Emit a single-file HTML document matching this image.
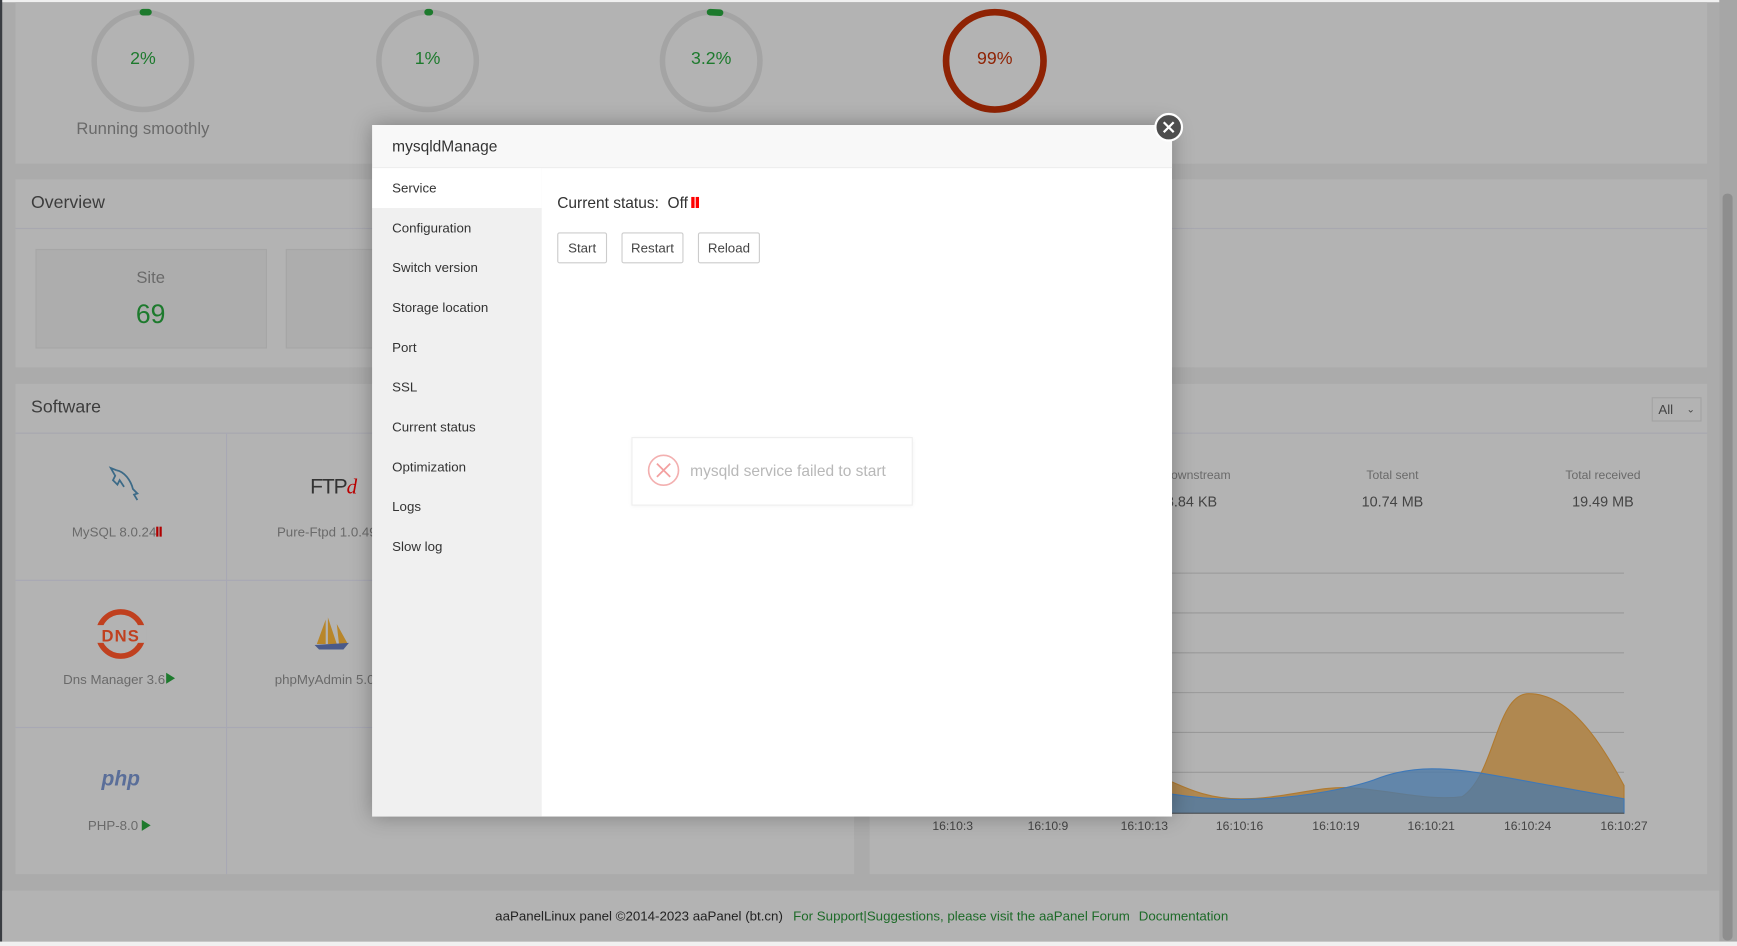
<!DOCTYPE html>
<html><head><meta charset="utf-8">
<style>
html,body{margin:0;padding:0;width:1737px;height:946px;overflow:hidden;background:#ababab;}
#w{position:absolute;left:0;top:0;width:1568px;height:855px;transform-origin:0 0;transform:scale(1.10778,1.10643);font-family:"Liberation Sans",sans-serif;background:#ababab;}
.a{position:absolute;}
.p{position:absolute;background:#b3b3b3;}
.t{position:absolute;white-space:nowrap;}
.c{transform:translateX(-50%);}
.menu div{height:36px;line-height:36px;padding-left:18px;font-size:12px;color:#333;}
.btn{position:absolute;top:210px;height:26px;line-height:26px;border:1px solid #ccc;border-radius:2px;font-size:12px;color:#444;text-align:center;background:#fff;}
</style></head><body><div id="w">
<div class="a" style="left:0;top:0;width:1568px;height:2px;background:#f0f0f0"></div>
<div class="a" style="left:0;top:0;width:2px;height:855px;background:#3a3d42"></div>
<div class="a" style="left:1552px;top:0;width:16px;height:855px;background:#a6a6a6"></div>
<div class="a" style="left:1555px;top:175px;width:9px;height:675px;background:#8e8e8e;border-radius:4px"></div>
<div class="a" style="left:0;top:851px;width:1568px;height:4px;background:#f0f0f0"></div>

<!-- gauges panel -->
<div class="p" style="left:14px;top:2px;width:1527px;height:146px"></div>
<svg class="a" style="left:0;top:0" width="1000" height="110">
<g fill="none" stroke-width="5">
<circle cx="129" cy="55" r="44" stroke="#a4a4a4"/><circle cx="386" cy="55" r="44" stroke="#a4a4a4"/>
<circle cx="642" cy="55" r="44" stroke="#a4a4a4"/><circle cx="898" cy="55" r="44" stroke="#8f2304" stroke-width="6"/>
</g>
<g stroke="#1d7a2d" stroke-width="6" stroke-linecap="round"><line x1="129" y1="11" x2="134" y2="11"/><line x1="386" y1="11" x2="388" y2="11"/><line x1="641" y1="11" x2="650" y2="11.5"/></g>
</svg>
<div class="t c" style="left:129px;top:45px;font-size:16px;color:#1d7a2d">2%</div>
<div class="t c" style="left:386px;top:45px;font-size:16px;color:#1d7a2d">1%</div>
<div class="t c" style="left:642px;top:45px;font-size:16px;color:#1d7a2d">3.2%</div>
<div class="t c" style="left:898px;top:45px;font-size:16px;color:#8f2304">99%</div>
<div class="t c" style="left:129px;top:108px;font-size:15px;color:#6a6a6a">Running smoothly</div>

<!-- overview -->
<div class="p" style="left:14px;top:162px;width:1527px;height:170px"></div>
<div class="a" style="left:14px;top:206px;width:1527px;height:1px;background:#a8a8b0"></div>
<div class="t" style="left:28px;top:175px;font-size:16px;color:#3c3c3c">Overview</div>
<div class="a" style="left:32px;top:225px;width:207px;height:88px;background:#adadad;border:1px solid #a6a6a6"></div>
<div class="a" style="left:258px;top:225px;width:207px;height:88px;background:#adadad;border:1px solid #a6a6a6"></div>
<div class="t c" style="left:136px;top:243px;font-size:15px;color:#6a6a6a">Site</div>
<div class="t c" style="left:136px;top:271px;font-size:24px;color:#1d7a2d">69</div>

<!-- software -->
<div class="p" style="left:14px;top:347px;width:757px;height:443px"></div>
<div class="a" style="left:14px;top:391px;width:757px;height:1px;background:#a8a8b0"></div>
<div class="t" style="left:28px;top:360px;font-size:16px;color:#3c3c3c">Software</div>
<div class="a" style="left:204px;top:391px;width:1px;height:399px;background:#a8a8b4"></div>
<div class="a" style="left:14px;top:524px;width:757px;height:1px;background:#a8a8b4"></div>
<div class="a" style="left:14px;top:657px;width:757px;height:1px;background:#a8a8b4"></div>
<svg class="a" style="left:90px;top:420px" width="40" height="36"><path d="M15 5 C22 6 28 14 30 22 L34 26 L31 27 L34 32 M15 5 L10 3 L14 10 L12 14 L16 18 L18 14 L22 20" fill="none" stroke="#3c6a87" stroke-width="1.6"/></svg>
<div class="t c" style="left:103px;top:474px;font-size:12px;color:#6a6a6a">MySQL 8.0.24</div>
<div class="a" style="left:141px;top:476px;width:2px;height:9px;background:#b00000"></div><div class="a" style="left:144px;top:476px;width:2px;height:9px;background:#b00000"></div>
<div class="t" style="left:280px;top:430px;font-size:19px;color:#333;letter-spacing:-1px">FTP<i style="color:#b00;font-family:'Liberation Serif',serif">d</i></div>
<div class="t" style="left:250px;top:474px;font-size:12px;color:#6a6a6a">Pure-Ftpd 1.0.49</div>
<svg class="a" style="left:86px;top:550px" width="46" height="46"><circle cx="23" cy="23" r="20" fill="none" stroke="#c0401f" stroke-width="5"/><rect x="0" y="15" width="46" height="16" fill="#b3b3b3"/><text x="23" y="30" text-anchor="middle" font-family="Liberation Sans" font-weight="bold" font-size="15" fill="#c0401f" letter-spacing="1">DNS</text></svg>
<div class="t c" style="left:103px;top:607px;font-size:12px;color:#6a6a6a">Dns Manager 3.6</div>
<svg class="a" style="left:149px;top:607px" width="10" height="12"><path d="M1 1 L9 6 L1 11Z" fill="#1d7a2d"/></svg>
<svg class="a" style="left:282px;top:556px" width="36" height="34"><path d="M12 4 L4 26 L12 26Z M14 2 L14 26 L22 26Z M22 8 L24 26 L32 26Z" fill="#b8862a"/><path d="M2 27 L33 25 L28 31 L6 31Z" fill="#4a5a8a"/></svg>
<div class="t" style="left:248px;top:607px;font-size:12px;color:#6a6a6a">phpMyAdmin 5.0</div>
<div class="t c" style="left:109px;top:694px;font-size:19px;font-weight:bold;font-style:italic;color:#5a6e99">php</div>
<div class="t c" style="left:102px;top:739px;font-size:12px;color:#6a6a6a">PHP-8.0</div>
<svg class="a" style="left:127px;top:740px" width="10" height="12"><path d="M1 1 L9 6 L1 11Z" fill="#1d7a2d"/></svg>

<!-- traffic -->
<div class="p" style="left:785px;top:347px;width:756px;height:443px"></div>
<div class="a" style="left:785px;top:391px;width:756px;height:1px;background:#a8a8b0"></div>
<div class="a" style="left:1491px;top:359px;width:43px;height:20px;border:1px solid #a3a3a3;font-size:12px;color:#444;line-height:20px;padding-left:5px;box-sizing:border-box;width:45px;height:22px">All <span style="position:absolute;right:5px;font-size:9px">&#8964;</span></div>
<div class="t c" style="left:1080px;top:424px;font-size:11px;color:#6a6a6a">Downstream</div>
<div class="t c" style="left:1072px;top:446px;font-size:13px;color:#444">18.84 KB</div>
<div class="t c" style="left:1257px;top:424px;font-size:11px;color:#6a6a6a">Total sent</div>
<div class="t c" style="left:1257px;top:446px;font-size:13px;color:#444">10.74 MB</div>
<div class="t c" style="left:1447px;top:424px;font-size:11px;color:#6a6a6a">Total received</div>
<div class="t c" style="left:1447px;top:446px;font-size:13px;color:#444">19.49 MB</div>
<svg class="a" style="left:0;top:0" width="1568" height="760">
<g stroke="#999" stroke-width="1"><line x1="840" y1="518" x2="1466" y2="518"/><line x1="840" y1="554" x2="1466" y2="554"/><line x1="840" y1="590" x2="1466" y2="590"/><line x1="840" y1="626" x2="1466" y2="626"/><line x1="840" y1="662" x2="1466" y2="662"/><line x1="840" y1="698" x2="1466" y2="698"/></g>
<path d="M1040 700 C1060 705 1080 722 1120 722 C1160 722 1190 710 1220 712 C1260 715 1290 724 1320 720 C1350 700 1350 627 1380 627 C1420 627 1450 680 1466 710 L1466 735 L1040 735Z" fill="#b08850" stroke="#b07a30"/>
<path d="M1040 715 C1070 720 1100 724 1140 722 C1180 720 1220 712 1240 705 C1260 697 1280 694 1300 695 C1330 696 1360 703 1400 710 L1466 722 L1466 735 L1040 735Z" fill="#4d7aa8" fill-opacity="0.8" stroke="#3e78b8"/>
<line x1="840" y1="735" x2="1466" y2="735" stroke="#555"/>
<g font-family="Liberation Sans" font-size="11" fill="#444" text-anchor="middle"><text x="860" y="750">16:10:3</text><text x="946" y="750">16:10:9</text><text x="1033" y="750">16:10:13</text><text x="1119" y="750">16:10:16</text><text x="1206" y="750">16:10:19</text><text x="1292" y="750">16:10:21</text><text x="1379" y="750">16:10:24</text><text x="1466" y="750">16:10:27</text></g>
</svg>

<!-- footer -->
<div class="a" style="left:2px;top:805px;width:1550px;height:46px;background:#b3b3b3"></div>
<div class="t" style="left:447px;top:821px;font-size:12px;color:#222">aaPanelLinux panel ©2014-2023 aaPanel (bt.cn)</div>
<div class="t" style="left:716px;top:821px;font-size:12px;color:#1d6a28">For Support|Suggestions, please visit the aaPanel Forum</div>
<div class="t" style="left:1028px;top:821px;font-size:12px;color:#1d6a28">Documentation</div>

<!-- modal -->
<div class="a" style="left:336px;top:113px;width:722px;height:625px;background:#fff;box-shadow:0 0 18px rgba(0,0,0,0.3)">
 <div class="a" style="left:0;top:0;width:722px;height:38px;background:#f8f8f8;border-bottom:1px solid #eee"></div>
 <div class="t" style="left:18px;top:11px;font-size:14px;color:#333">mysqldManage</div>
 <div class="a menu" style="left:0;top:39px;width:153px;height:586px;background:#f0f0f0">
  <div style="background:#fff">Service</div><div>Configuration</div><div>Switch version</div><div>Storage location</div><div>Port</div><div>SSL</div><div>Current status</div><div>Optimization</div><div>Logs</div><div>Slow log</div>
 </div>
</div>
<div class="t" style="left:503px;top:175px;font-size:14px;color:#333">Current status:&nbsp; Off</div>
<div class="a" style="left:624px;top:178px;width:3px;height:10px;background:#f00"></div><div class="a" style="left:628px;top:178px;width:3px;height:10px;background:#f00"></div>
<div class="btn" style="left:503px;width:43px">Start</div>
<div class="btn" style="left:561px;width:54px">Restart</div>
<div class="btn" style="left:630px;width:54px">Reload</div>
<div class="a" style="left:570px;top:395px;width:252px;height:60px;background:#fff;border:1px solid #eee;box-shadow:0 1px 4px rgba(0,0,0,0.05)"></div>
<svg class="a" style="left:584px;top:410px" width="30" height="30"><circle cx="15" cy="15" r="13.5" fill="none" stroke="#f3b0b0" stroke-width="1.5"/><path d="M9 9 L21 21 M21 9 L9 21" stroke="#f3a0a0" stroke-width="1.6"/></svg>
<div class="t" style="left:623px;top:417px;font-size:14px;color:#b8b8b8">mysqld service failed to start</div>
<svg class="a" style="left:1041px;top:101px" width="28" height="28"><circle cx="14" cy="14" r="12" fill="#4d4d4d" stroke="#fff" stroke-width="2"/><path d="M9.5 9.5 L18.5 18.5 M18.5 9.5 L9.5 18.5" stroke="#fff" stroke-width="2"/></svg>
</div></body></html>
